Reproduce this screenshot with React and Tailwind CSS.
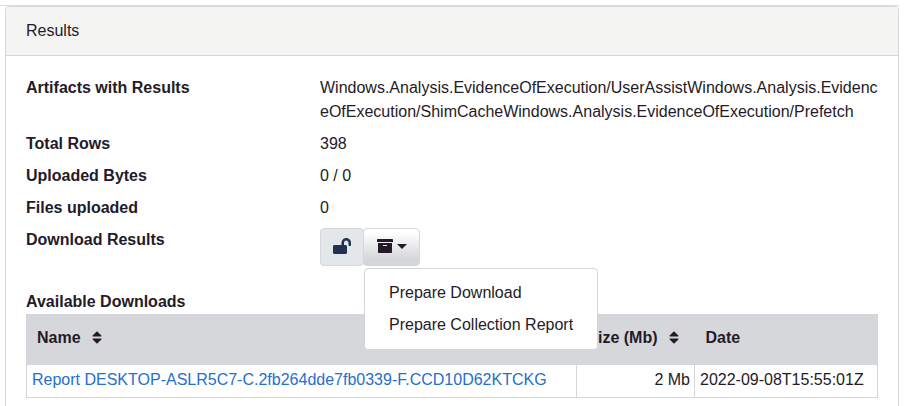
import React from "react";
import { FaLockOpen } from "react-icons/fa";

const rows = [
  ["Total Rows", "398"],
  ["Uploaded Bytes", "0 / 0"],
  ["Files uploaded", "0"],
];

function Row({ label, children }) {
  return (
    <div className="mb-2 flex">
      <dt className="w-[294px] shrink-0 font-bold">{label}</dt>
      <dd className="w-[564px]">{children}</dd>
    </div>
  );
}

function SortIcon() {
  return (
    <svg className="h-[13px] w-[10px]" viewBox="0 0 10 13" fill="currentColor">
      <path d="M5 .3 9.4 4.6Q9.7 5.4 9 5.5H1Q.3 5.4.6 4.6zM1 7.5h8q.7.1.4.9L5 12.7.6 8.4Q.3 7.6 1 7.5z" />
    </svg>
  );
}

function ArchiveIcon() {
  return (
    <svg className="h-[14px] w-4" viewBox="0 0 16 14" fill="currentColor">
      <path d="M0 .4Q0 0 .4 0h15.2q.4 0 .4.4V3H0z" />
      <path
        fillRule="evenodd"
        d="M1 4h14v9.2q0 .8-.8.8H1.8Q1 14 1 13.2zM6 6v1h4V6z"
      />
    </svg>
  );
}

export default function App() {
  return (
    <div className="h-[406px] w-[906px] overflow-hidden bg-white pt-[5px] font-['Liberation_Sans',Arial,sans-serif] text-base leading-6 text-[#241b28]">
      <div className="w-[899px] border-t border-[#dcdde0]">
        <div className="ml-[5px] h-[420px] w-[894px] rounded-t border border-[#d5d6d9]">
          <div className="h-[49px] rounded-t-[3px] border-b border-[#d5d6d9] bg-[#f4f4f3] px-5 pt-3">
            Results
          </div>
          <div className="px-5 pt-5">
            <dl>
              <Row label="Artifacts with Results">
                Windows.Analysis.EvidenceOfExecution/UserAssistWindows.Analysis.Evidenc
                <br />
                eOfExecution/ShimCacheWindows.Analysis.EvidenceOfExecution/Prefetch
              </Row>
              {rows.map(([label, value]) => (
                <Row key={label} label={label}>
                  {value}
                </Row>
              ))}
              <Row label="Download Results">
                <div className="relative flex h-[38px] w-[100px]">
                  <button className="flex h-[38px] w-[45px] items-center justify-center rounded border border-[#d5d6d9] bg-[#e4e7ea] pb-0.5">
                    <FaLockOpen className="h-4 w-[18px] text-[#24304f]" />
                  </button>
                  <button className="-ml-px flex h-[38px] w-[57px] shrink-0 items-center justify-center gap-1 rounded border border-[#d5d6d9] bg-linear-to-b from-white from-10% to-[#d5d6d9] to-85% pb-0.5">
                    <ArchiveIcon />
                    <svg className="h-[5px] w-[10px]" viewBox="0 0 10 5" fill="currentColor">
                      <path d="M0 0h10L5 5z" />
                    </svg>
                  </button>
                  <div className="absolute top-[40px] left-[44px] z-10 h-[82px] w-[234px] rounded border border-[#d5d6d9] bg-white px-6 py-2">
                    <div className="h-8 pt-1 whitespace-nowrap">Prepare Download</div>
                    <div className="h-8 pt-1 whitespace-nowrap">Prepare Collection Report</div>
                  </div>
                </div>
              </Row>
            </dl>
            <div className="mt-6 font-bold">Available Downloads</div>
            <table className="w-[852px] table-fixed border-collapse border border-[#d5d6d9]">
              <colgroup>
                <col className="w-[550px]" />
                <col className="w-[118px]" />
                <col className="w-[183px]" />
              </colgroup>
              <thead className="bg-[#d6d7da] text-left">
                <tr className="h-[50px]">
                  <th className="px-[10px] pb-1">
                    <div className="flex items-center gap-[11px]">
                      Name <SortIcon />
                    </div>
                  </th>
                  <th className="pr-4 pb-1 whitespace-nowrap">
                    <div className="flex items-center justify-end gap-[11px]">
                      Size (Mb) <SortIcon />
                    </div>
                  </th>
                  <th className="px-[11px] pb-1">Date</th>
                </tr>
              </thead>
              <tbody>
                <tr className="h-[33px]">
                  <td className="border border-[#d5d6d9] px-[5px] pb-0.5 text-[#246fd0]">
                    Report DESKTOP-ASLR5C7-C.2fb264dde7fb0339-F.CCD10D62KTCKG
                  </td>
                  <td className="border border-[#d5d6d9] px-1 pb-0.5 text-right">2 Mb</td>
                  <td className="border border-[#d5d6d9] px-[5px] pb-0.5">2022-09-08T15:55:01Z</td>
                </tr>
              </tbody>
            </table>
          </div>
        </div>
      </div>
    </div>
  );
}
